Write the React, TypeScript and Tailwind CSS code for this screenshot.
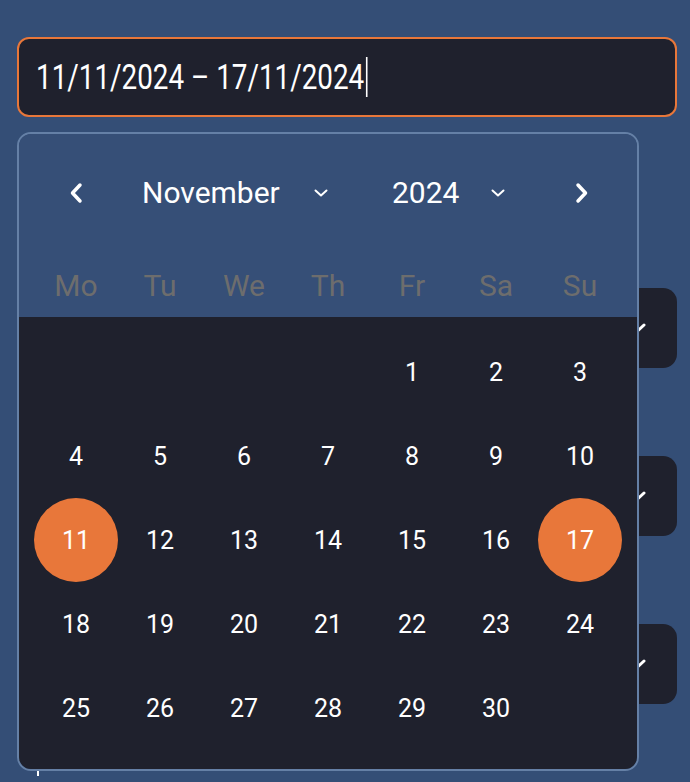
import React from "react";

const weeks: (number | null)[][] = [
  [null, null, null, null, 1, 2, 3],
  [4, 5, 6, 7, 8, 9, 10],
  [11, 12, 13, 14, 15, 16, 17],
  [18, 19, 20, 21, 22, 23, 24],
  [25, 26, 27, 28, 29, 30, null],
];

const weekdays = ["Mo", "Tu", "We", "Th", "Fr", "Sa", "Su"];

function ChevronDownSmall() {
  return (
    <svg width="14" height="8" viewBox="0 0 14 8" fill="none">
      <path d="M1.5 1.5 L7 6.5 L12.5 1.5" stroke="white" strokeWidth="2" strokeLinecap="round" strokeLinejoin="round" />
    </svg>
  );
}

function Field() {
  return (
    <div className="flex h-[80px] items-center justify-end rounded-[14px] bg-[#1f212d] pr-[31px]">
      <svg width="18" height="10" viewBox="0 0 18 10" fill="none">
        <path d="M2 2 L9 8.5 L16 2" stroke="white" strokeWidth="3" strokeLinecap="round" strokeLinejoin="round" />
      </svg>
    </div>
  );
}

export default function App() {
  return (
    <div className="min-h-screen bg-[#344e76] font-['Roboto',sans-serif]">
      <div className="relative ml-[17px] w-[660px] pt-[37px]">
        <div className="flex h-[80px] items-center rounded-[12px] border-2 border-[#e8773a] bg-[#1f212d] pl-[17px]">
          <div className="flex origin-left scale-x-[0.795] items-center">
            <span className="whitespace-nowrap text-[35px] leading-none text-white">11/11/2024 – 17/11/2024</span>
            <span className="ml-[2px] h-[40px] w-[2px] bg-white" />
          </div>
        </div>

        <div className="mt-[171px]">
          <Field />
        </div>
        <div className="mt-[88px]">
          <Field />
        </div>
        <div className="mt-[88px]">
          <Field />
        </div>
        <div className="ml-[20px] mt-[66px] h-[6px] w-[2px] bg-white" />

        <div className="absolute left-0 top-[132px] w-[622px] overflow-hidden rounded-[14px] border-2 border-[#6580a6]">
          <div className="bg-[#364f77] px-[15px] pt-[35px]">
            <div className="flex h-[48px] items-center text-[30px] leading-none text-white">
              <div className="flex w-[84px] justify-center">
                <svg width="14" height="22" viewBox="0 0 14 22" fill="none">
                  <path d="M11 3 L3.5 11 L11 19" stroke="white" strokeWidth="3.5" strokeLinecap="round" strokeLinejoin="round" />
                </svg>
              </div>
              <div className="flex w-[252px] items-center pl-[24px]">
                <span>November</span>
                <span className="ml-[34px] flex items-center">
                  <ChevronDownSmall />
                </span>
              </div>
              <div className="flex w-[168px] items-center pl-[22px]">
                <span>2024</span>
                <span className="ml-[32px] flex items-center">
                  <ChevronDownSmall />
                </span>
              </div>
              <div className="flex w-[84px] justify-center pl-[4px]">
                <svg width="14" height="22" viewBox="0 0 14 22" fill="none">
                  <path d="M3 3 L10.5 11 L3 19" stroke="white" strokeWidth="3.5" strokeLinecap="round" strokeLinejoin="round" />
                </svg>
              </div>
            </div>
            <div className="mt-[38px] grid h-[62px] grid-cols-7 items-center text-[30px] leading-none text-[#6d6d6d]">
              {weekdays.map((d) => (
                <div key={d} className="text-center">
                  {d}
                </div>
              ))}
            </div>
          </div>
          <div className="bg-[#1f212d] px-[15px] pb-[19px] pt-[13px]">
            {weeks.map((week, wi) => (
              <div key={wi} className="grid grid-cols-7">
                {week.map((day, di) => {
                  const selected = day === 11 || day === 17;
                  return (
                    <div key={di} className="flex h-[84px] items-center justify-center">
                      {day !== null && (
                        <div
                          className={
                            selected
                              ? "flex h-[84px] w-[84px] items-center justify-center rounded-full bg-[#e8773a] text-[25px] leading-none text-white"
                              : "flex h-[84px] w-[84px] items-center justify-center text-[25px] leading-none text-white"
                          }
                        >
                          {day}
                        </div>
                      )}
                    </div>
                  );
                })}
              </div>
            ))}
          </div>
        </div>
      </div>
    </div>
  );
}
